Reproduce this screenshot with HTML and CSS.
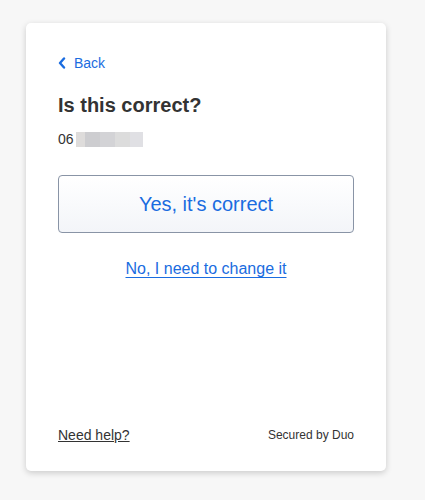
FILE: index.html
```html
<!DOCTYPE html>
<html>
<head>
<meta charset="utf-8">
<link rel="stylesheet" href="styles.css">
</head>
<body>
<div class="card">
  <a class="back" href="#">
    <svg class="chev" width="8" height="12" viewBox="0 0 8 12"><path d="M6 1.5 L2 6 L6 10.5" fill="none" stroke="#1a6ce0" stroke-width="2.4" stroke-linecap="round" stroke-linejoin="round"/></svg>
    <span>Back</span>
  </a>
  <h1 class="title">Is this correct?</h1>
  <div class="phone"><span>06</span><span class="blur"><i class="b1"></i><i class="b2"></i><i class="b3"></i><i class="b4"></i><i class="b5"></i></span></div>
  <button class="yes">Yes, it's correct</button>
  <div class="nowrap"><a class="no" href="#">No, I need to change it</a></div>
  <div class="spacer"></div>
  <div class="footer">
    <a class="help" href="#">Need help?</a>
    <span class="secured">Secured by Duo</span>
  </div>
</div>
</body>
</html>
```
FILE: styles.css
```css
html, body { margin: 0; padding: 0; }
body {
  background: #f7f7f7;
  font-family: "Liberation Sans", Arial, sans-serif;
  width: 425px;
  height: 500px;
  padding-top: 23px;
  padding-left: 26px;
  box-sizing: border-box;
}
.card {
  width: 360px;
  height: 448px;
  background: #fff;
  border-radius: 5px;
  box-shadow: 0 2px 6px rgba(0,0,0,0.18);
  box-sizing: border-box;
  padding: 32px 32px 0 32px;
  display: flex;
  flex-direction: column;
}
.back {
  display: flex;
  align-items: center;
  gap: 8px;
  color: #1a6ce0;
  text-decoration: none;
  font-size: 14px;
  height: 16px;
}
.chev { display: block; }
.title {
  margin: 22px 0 0 0;
  font-size: 20px;
  font-weight: bold;
  color: #333;
  line-height: 24px;
}
.phone {
  margin-top: 14px;
  display: flex;
  align-items: center;
  font-size: 14px;
  color: #333;
  height: 16px;
}
.blur { display: flex; height: 15px; margin-left: 2px; }
.blur i { display: block; height: 15px; }
.b1 { width: 9px; background: #dedcdb; }
.b2 { width: 15px; background: #cdcdd0; }
.b3 { width: 15px; background: #d3d3d6; }
.b4 { width: 15px; background: #dcdcdc; }
.b5 { width: 13px; background: #e0e0e4; }
.yes {
  margin-top: 28px;
  width: 296px;
  height: 58px;
  border: 1px solid #8994a6;
  border-radius: 4px;
  background: linear-gradient(#ffffff, #f3f5f9);
  color: #1a6ce0;
  font-family: "Liberation Sans", Arial, sans-serif;
  font-size: 20px;
  padding: 0;
  cursor: pointer;
}
.nowrap {
  margin-top: 26px;
  text-align: center;
  line-height: 20px;
}
.no {
  color: #1a6ce0;
  font-size: 16px;
  text-decoration: underline;
  text-underline-offset: 3px;
}
.spacer { flex: 1; }
.footer {
  display: flex;
  justify-content: space-between;
  align-items: center;
  height: 18px;
  margin-bottom: 27px;
}
.help {
  color: #333;
  font-size: 14px;
  text-decoration: underline;
}
.secured {
  color: #333;
  font-size: 12px;
}
```
